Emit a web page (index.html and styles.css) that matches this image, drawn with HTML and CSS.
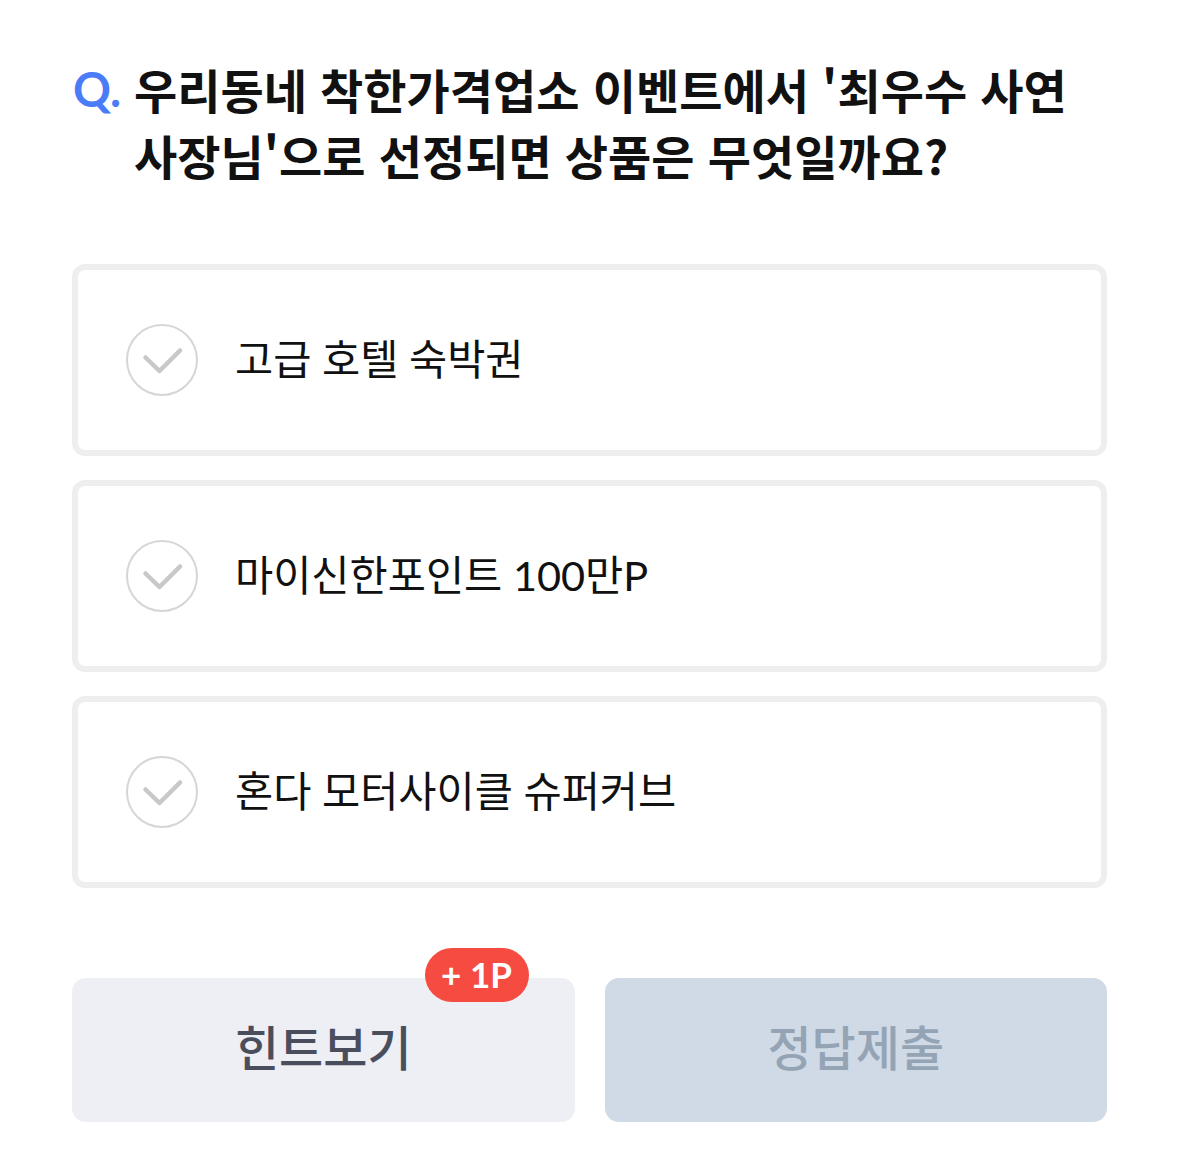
FILE: index.html
```html
<!DOCTYPE html>
<html lang="ko">
<head>
<meta charset="utf-8">
<link rel="stylesheet" href="styles.css">
</head>
<body>
<main class="quiz">
  <h1 class="question"><span class="q-mark">Q.</span><span class="q-text">우리동네 착한가격업소 이벤트에서 '최우수 사연 사장님'으로 선정되면 상품은 무엇일까요?</span></h1>
  <ul class="options">
    <li class="option">
      <svg class="check" viewBox="0 0 72 72" width="72" height="72"><circle cx="36" cy="36" r="35" fill="none" stroke="#d6d6d6" stroke-width="2"/><path d="M19.5 33.5 L33.5 47 L54 26.5" fill="none" stroke="#c8c8c8" stroke-width="4.5" stroke-linecap="round" stroke-linejoin="round"/></svg>
      <span class="label">고급 호텔 숙박권</span>
    </li>
    <li class="option">
      <svg class="check" viewBox="0 0 72 72" width="72" height="72"><circle cx="36" cy="36" r="35" fill="none" stroke="#d6d6d6" stroke-width="2"/><path d="M19.5 33.5 L33.5 47 L54 26.5" fill="none" stroke="#c8c8c8" stroke-width="4.5" stroke-linecap="round" stroke-linejoin="round"/></svg>
      <span class="label">마이신한포인트 100만P</span>
    </li>
    <li class="option">
      <svg class="check" viewBox="0 0 72 72" width="72" height="72"><circle cx="36" cy="36" r="35" fill="none" stroke="#d6d6d6" stroke-width="2"/><path d="M19.5 33.5 L33.5 47 L54 26.5" fill="none" stroke="#c8c8c8" stroke-width="4.5" stroke-linecap="round" stroke-linejoin="round"/></svg>
      <span class="label">혼다 모터사이클 슈퍼커브</span>
    </li>
  </ul>
  <div class="actions">
    <button class="btn btn-hint">힌트보기<span class="badge">+ 1P</span></button>
    <button class="btn btn-submit">정답제출</button>
  </div>
</main>
</body>
</html>
```
FILE: styles.css
```css
* { box-sizing: border-box; }
html, body { margin: 0; padding: 0; background: #ffffff; }
body {
  font-family: Lato, "Noto Sans CJK KR", sans-serif;
  color: #111111;
}
.quiz {
  padding: 56px 72px 0 72px;
}
.question {
  display: flex;
  margin: 0;
  font-size: 47px;
  font-weight: 600;
  line-height: 66px;
  word-break: keep-all;
}
.q-mark {
  color: #4a7cf7;
  width: 62px;
  flex: none;
  padding-left: 1px;
  font-weight: 700;
}
.q-text {
  flex: 1;
  color: #111111;
  font-family: "Noto Sans CJK KR", sans-serif;
}
.options {
  list-style: none;
  margin: 76px 0 0 0;
  padding: 0;
  display: flex;
  flex-direction: column;
  gap: 24px;
}
.option {
  height: 192px;
  border: 6px solid #eeeeee;
  border-radius: 13px;
  display: flex;
  align-items: center;
  padding-left: 48px;
}
.check {
  flex: none;
  display: block;
}
.label {
  margin-left: 37px;
  font-size: 41.5px;
  font-weight: 400;
  color: #111111;
  margin-top: -6px;
}
.actions {
  display: flex;
  gap: 30px;
  margin-top: 90px;
}
.btn {
  position: relative;
  flex: 1;
  height: 144px;
  border: none;
  border-radius: 14px;
  font-family: Lato, "Noto Sans CJK KR", sans-serif;
  font-size: 48px;
  font-weight: 500;
  padding: 0 0 10px 0;
}
.btn-hint {
  background: #eeeff5;
  color: #4a4e5c;
}
.btn-submit {
  background: #d0dae6;
  color: #95a4b5;
}
.badge {
  position: absolute;
  top: -30px;
  right: 46px;
  height: 54px;
  width: 104px;
  border-radius: 27px;
  background: #f64b40;
  color: #ffffff;
  font-family: Lato, sans-serif;
  font-size: 35px;
  font-weight: 700;
  line-height: 52px;
  text-align: center;
}
```
